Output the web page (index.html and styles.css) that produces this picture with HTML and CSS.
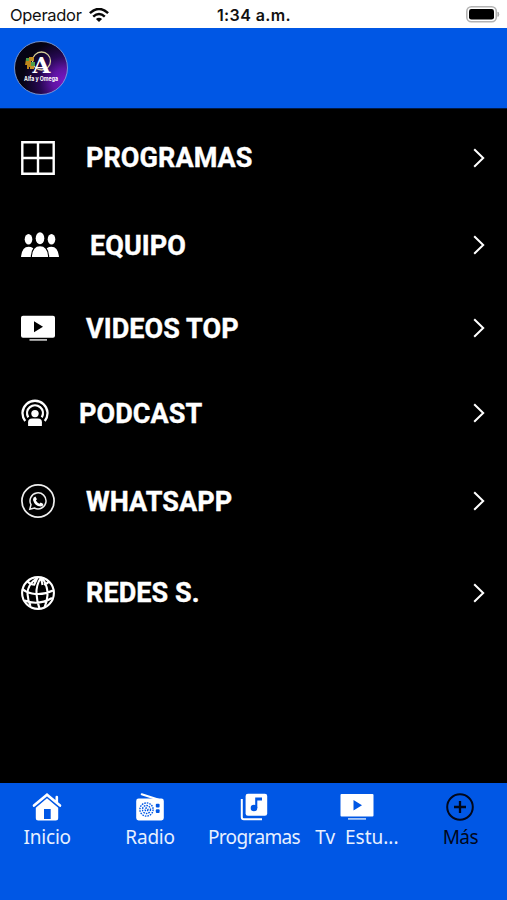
FILE: index.html
```html
<!DOCTYPE html>
<html lang="es">
<head>
<meta charset="utf-8">
<meta name="viewport" content="width=device-width, initial-scale=1">
<title>Alfa y Omega</title>
<link rel="stylesheet" href="styles.css">
</head>
<body>
<div class="status">
  <div class="carrier"><span>Operador</span>
    <svg width="20" height="14" viewBox="0 0 20 14"><g fill="none" stroke="#080808" stroke-width="2.5"><path d="M.9 5.2Q10-3.2 19.1 5.2"/><path d="M4.2 8.6Q10 3.4 15.8 8.6"/></g><path d="M6.9 11Q10 8.3 13.1 11L10 14Z" fill="#080808"/></svg>
  </div>
  <time class="clock">1:34 a.m.</time>
  <svg class="battery" width="34" height="17" viewBox="0 0 34 17"><rect x=".8" y=".8" width="29.5" height="15" rx="4.6" fill="#fff" stroke="#b3b3b3" stroke-width="1.6"/><rect x="3" y="3" width="25" height="10.6" rx="2.4"/><path d="M32 6.2q1.6 2 0 4.2Z" fill="#aaa" stroke="#aaa"/></svg>
</div>
<header class="header">
  <svg width="54" height="54" viewBox="0 0 54 54" role="img" aria-label="Alfa y Omega">
    <defs><radialGradient id="glow" cx=".95" cy=".75" r=".8"><stop offset="0" stop-color="#7a18c8"/><stop offset=".3" stop-color="#5f14a2"/><stop offset=".6" stop-color="#260852"/><stop offset="1" stop-color="#050313"/></radialGradient></defs>
    <circle cx="27" cy="27" r="26.5" fill="url(#glow)" stroke="#8fa9dc" stroke-width=".8"/>
    <circle cx="27.5" cy="20" r="9" fill="none" stroke="#d8d09a" stroke-width="1.3"/>
    <path d="M12 18h3v-2h2v10h-2v2h-2v-4h-2z" fill="#bd861c"/><path d="M12 17h3v3h-3zM17 21h4v4h-4z" fill="#4d9d4b"/><path d="M17 16h3v4h-3zM16 25h4v3h-4z" fill="#c28f25"/>
    <text class="logo-letter" x="27.5" y="32" text-anchor="middle">A</text>
    <text class="logo-name" x="27" y="40.2" text-anchor="middle" textLength="34" lengthAdjust="spacingAndGlyphs">Alfa y Omega</text>
  </svg>
</header>
<main class="menu">
  <a class="row programas">
    <svg class="icon" width="34" height="34" viewBox="0 0 34 34"><path d="M1.3 1.3h31.4v31.4H1.3zM17 1v32M1 17h32" fill="none" stroke="#fff" stroke-width="2.4"/></svg>
    <span class="label">PROGRAMAS</span><svg class="chevron" width="12" height="20" viewBox="0 0 12 20"><path d="m1.2 1.2 9 8.8-9 8.8"/></svg></a>
  <a class="row equipo">
    <svg class="icon" width="38" height="26" viewBox="0 0 38 26" fill="#fff"><ellipse cx="7.5" cy="7.3" rx="3.8" ry="5.2"/><ellipse cx="30.5" cy="7.3" rx="3.8" ry="5.2"/><ellipse cx="19" cy="6.2" rx="4.3" ry="6"/><path d="M0 25Q1 14.8 7.5 14.8 10 14.8 12.3 16.2 9.9 19 9.8 25ZM38 25Q37 14.8 30.5 14.8 28 14.8 25.7 16.2 28.1 19 28.2 25ZM10.9 25Q11.5 14.3 19 14.3T27.1 25Z"/></svg>
    <span class="label">EQUIPO</span><svg class="chevron" width="12" height="20" viewBox="0 0 12 20"><path d="m1.2 1.2 9 8.8-9 8.8"/></svg></a>
  <a class="row videos">
    <svg class="icon" width="34" height="26" viewBox="0 0 34 26"><path fill="#fff" fill-rule="evenodd" d="M2 .7h30a2 2 0 0 1 2 2v18a2 2 0 0 1-2 2H2a2 2 0 0 1-2-2v-18a2 2 0 0 1 2-2ZM13 6.2v11L22 11.7Z"/><path fill="#bbb" d="M8.5 24H26v1.8H8.5z"/></svg>
    <span class="label">VIDEOS TOP</span><svg class="chevron" width="12" height="20" viewBox="0 0 12 20"><path d="m1.2 1.2 9 8.8-9 8.8"/></svg></a>
  <a class="row podcast">
    <svg class="icon" width="28" height="28" viewBox="0 0 28 28"><g fill="none" stroke="#fff" stroke-width="2.3"><path d="M4.2 22A12.5 12.5 0 1 1 23.8 22"/><path d="M7.2 18.3A7.9 7.9 0 1 1 20.8 18.3"/></g><circle cx="14" cy="14.6" r="3.7" fill="#fff"/><path fill="#fff" d="M7.1 27v-3.8q0-3.7 4-3.7h5.8q4 0 4 3.7V27Z"/></svg>
    <span class="label">PODCAST</span><svg class="chevron" width="12" height="20" viewBox="0 0 12 20"><path d="m1.2 1.2 9 8.8-9 8.8"/></svg></a>
  <a class="row whatsapp">
    <svg class="icon" width="34" height="34" viewBox="0 0 34 34"><g fill="none" stroke="#eee"><circle cx="17" cy="17" r="16.1" stroke-width="1.7"/><path stroke-width="1.5" d="m8.8 25.2 1.2-4.5A8 8 0 1 1 13.4 24Z"/></g><path fill="#fff" d="m14.4 12.5 1.5 2.8-1 1.3q1.2 2.3 3.5 3.2l1.3-1.3 2.7 1.4q-.2 2.5-2.7 2.6-6-.6-7.7-6.6-.2-2.5 2.4-3.4Z"/></svg>
    <span class="label">WHATSAPP</span><svg class="chevron" width="12" height="20" viewBox="0 0 12 20"><path d="m1.2 1.2 9 8.8-9 8.8"/></svg></a>
  <a class="row redes">
    <svg class="icon" width="34" height="34" viewBox="0 0 34 34"><g fill="none" stroke="#fff" stroke-width="2.1"><circle cx="17" cy="17" r="15.9"/><path d="M6.5 5.5Q9.5 8.5 14 8.8M23 8.5Q26.5 7.5 28 5.5M1.5 13Q5 16.5 11 17.5 22 19.5 32 14.5M3.5 24.5Q17 30 31 22M16.5 1.5Q6 9 6.5 18 7 25 9.5 30M20 1.5Q15 9 15.5 18 16 26 18.5 32.5M21.5 2Q27 11 26.5 19 26 26 23.5 31.5M16.5 1.5 13 9M20 1.5 21.5 9"/></g></svg>
    <span class="label">REDES S.</span><svg class="chevron" width="12" height="20" viewBox="0 0 12 20"><path d="m1.2 1.2 9 8.8-9 8.8"/></svg></a>
</main>
<nav class="tabs">
  <a class="tab inicio"><svg width="34" height="28" viewBox="0 0 34 28"><path d="m4 12.6 13-10.8 13 10.8M26.8 9V4" fill="none" stroke="#fff" stroke-width="2.6" stroke-linecap="round"/><path fill="#fff" fill-rule="evenodd" d="m17 5.3 11.2 9.5V25q0 2.5-2.5 2.5H8.3q-2.5 0-2.5-2.5V14.8ZM14 16v10h6.7V16Z"/></svg><span>Inicio</span></a>
  <a class="tab radio"><svg width="34" height="28" viewBox="0 0 34 28"><path d="M8.7 1.2 25 6.5" stroke="#fff" stroke-width="2" stroke-linecap="round"/><rect x="3.2" y="5.5" width="27.6" height="22" rx="2.4" fill="#fff"/><g fill="none" stroke="#0057e5" stroke-width="1.4" stroke-dasharray="1.6 1"><circle cx="13.5" cy="16.5" r="6.6"/><circle cx="13.5" cy="16.5" r="4"/><circle cx="13.5" cy="16.5" r="1.5"/></g><rect x="22.8" y="10.7" width="3.8" height="3.8" rx="1" fill="#0057e5"/><rect x="22.8" y="16.2" width="3.8" height="3.8" rx="1" fill="#0057e5"/></svg><span>Radio</span></a>
  <a class="tab programs"><svg width="34" height="28" viewBox="0 0 34 28"><path d="M4.8 6v18.2q0 2 2 2H25" fill="none" stroke="#fff" stroke-width="2"/><rect x="8.6" y=".7" width="21.6" height="22" rx="2.3" fill="#fff"/><circle cx="17" cy="15" r="3.3" fill="#0057e5"/><path d="M18.2 4.5H25v3h-4.7V15h-2.1z" fill="#0057e5"/></svg><span>Programas</span></a>
  <a class="tab tv"><svg width="34" height="28" viewBox="0 0 34 28"><path fill="#fff" fill-rule="evenodd" d="M1.5 1h31q1 0 1 1v20.5q0 1-1 1h-31q-1 0-1-1V2q0-1 1-1ZM13.5 7v10.5L22 12.2Z"/><path fill="#a9c8f7" d="M8 25h18v1.8H8z"/></svg><span>Tv&nbsp; Estu...</span></a>
  <a class="tab mas"><svg width="34" height="28" viewBox="0 0 34 28" fill="none" stroke="#00071b" stroke-width="2"><circle cx="17" cy="14" r="12.8"/><path d="M17 8v12M11 14h12" stroke-width="2.3"/></svg><span>Más</span></a>
</nav>
</body>
</html>
```

FILE: styles.css
```css
* { box-sizing: border-box; }
body { margin: 0; width: 507px; height: 900px; overflow: hidden; display: flex; flex-direction: column; background: #000; }
svg { display: block; flex: none; }
.status { height: 28px; padding: 2px 7px 0 10px; display: grid; grid-template-columns: 1fr auto 1fr; align-items: center; background: #fff; color: #111; font: 16.5px/20px Inter, sans-serif; }
.carrier { display: flex; align-items: center; gap: 7px; }
.carrier span { letter-spacing: -.3px; }
.clock { margin-right: 2px; font-weight: 600; font-size: 16px; letter-spacing: .4px; }
.battery { justify-self: end; margin-top: -2px; }
.header { height: 81px; padding: 13px 14px; background: #0057e5; border-bottom: 1px solid #001a48; }
.logo-letter { font: bold 23px "DejaVu Serif", serif; fill: #fff; }
.logo-name { font: bold 6px Inter, sans-serif; fill: #fff; }
.menu { flex: 1; color: #fff; }
.row { display: flex; align-items: center; padding: 0 21px; }
.label { flex: 1; margin-left: 31px; font: bold 27px/32px Roboto, sans-serif; letter-spacing: .08px; -webkit-text-stroke: .4px #fff; white-space: nowrap; }
.chevron { fill: none; stroke: #fff; stroke-width: 2; margin-right: 1px; }
.programas { height: 97px; }
.equipo { height: 78px; }
.equipo .label, .videos .label, .podcast .label, .whatsapp .label { padding-top: 1px; }
.videos { height: 88px; }
.podcast { height: 82px; }
.podcast .label { margin-left: 30px; }
.whatsapp { height: 94px; }
.redes { height: 90px; }
.tabs { height: 117px; margin: 0 -5px; padding-top: 10px; display: grid; grid-template-columns: repeat(5, 1fr); background: #0057e5; color: #e7f0ff; }
.tab { display: flex; flex-direction: column; align-items: center; font: 19px/30px "Noto Sans", sans-serif; letter-spacing: -.2px; white-space: nowrap; }
.tab span { padding-top: 1px; }
.inicio span { margin-left: 1px; }
.programs { letter-spacing: -.62px; }
.programs svg, .programs span { margin-left: 1px; }
.tv { letter-spacing: 0; }
.mas { color: #00071b; letter-spacing: -.6px; }
```
